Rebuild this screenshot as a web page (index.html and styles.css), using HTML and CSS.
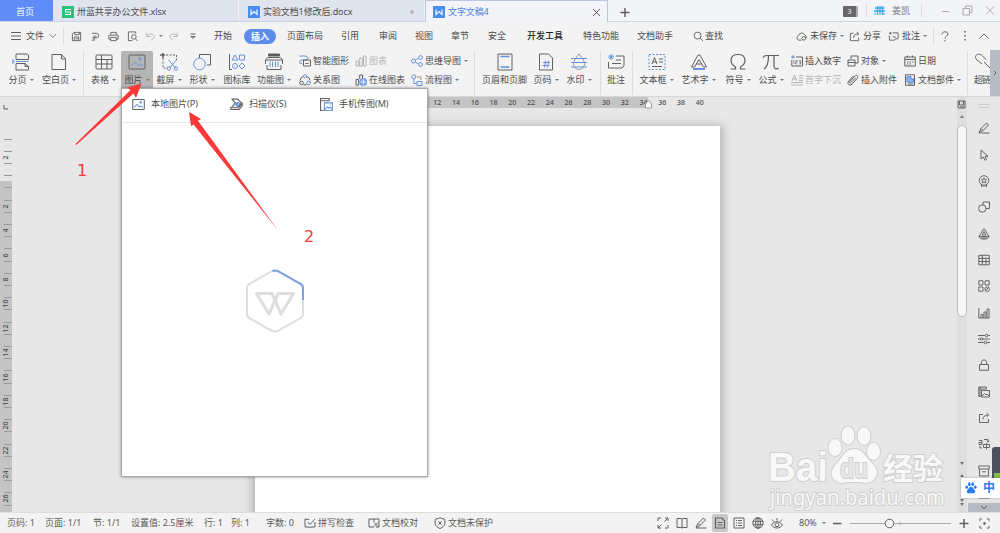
FILE: index.html
```html
<!DOCTYPE html>
<html lang="zh-CN">
<head>
    <meta charset="utf-8">
    <meta name="viewport" content="width=device-width, initial-scale=1.0">
    <title>文字文稿4</title>
    <link rel="stylesheet" href="styles.css">
</head>
<body>
    <!-- 图标 -->
    <svg class="defs">
        <symbol id="i-save" viewBox="0 0 12 12"><path d="M3 1.5h7.5v9h-9V3zM4 1.5V4h5V1.5M3.5 10.5V6.500h5v4M5 8.500h3"/></symbol>
        <symbol id="i-out" viewBox="0 0 12 12"><path d="M2 2.500h5a2.300 2.300 0 0 1 0 5H2.500M7 5.500H4.500V10M2 10h3"/></symbol>
        <symbol id="i-print" viewBox="0 0 12 12"><path d="M3 4V1.500h6V4M3 9H1V4.500h10V9H9M3 7h6v3.500H3z"/></symbol>
        <symbol id="i-preview" viewBox="0 0 12 12"><path d="M9.500 3V1h-8v9.500H6"/><circle cx="7.500" cy="6.500" r="2.500"/><path d="M9.300 8.500l2.200 2.500"/></symbol>
        <symbol id="i-undo" viewBox="0 0 12 12"><path d="M2 2v4h4M2 5.500C4 2.500 10 2.500 10 6c0 2-1.500 3-3.500 4"/></symbol>
        <symbol id="i-redo" viewBox="0 0 12 12"><path d="M10 2v4H6M10 5.500C8 2.500 2 2.500 2 6c0 2 1.500 3 3.500 4"/></symbol>
        <symbol id="i-search" viewBox="0 0 12 12"><circle cx="5" cy="5" r="3.800"/><path d="M7.800 7.800L11 11"/></symbol>
        <symbol id="i-cloud" viewBox="0 0 12 12"><path d="M6 10H3a2.500 2.500 0 0 1-.3-4.800A3.500 3.500 0 0 1 9.300 4.200 2.800 2.800 0 0 1 11 8"/><circle cx="8.500" cy="8" r="2"/></symbol>
        <symbol id="i-share" viewBox="0 0 12 12"><path d="M5 2.500H1.500v8h9V7M5 7.500c0-3 2-4.500 5.500-4.500M8.500 1l2.200 2-2.200 2"/></symbol>
        <symbol id="i-cmt" viewBox="0 0 12 12"><path d="M5 2h6v6.500H8l-1 1.500H1.500V5M1 2.500h3M2.500 1v3M5 6.500h3.500"/></symbol>
        <symbol id="i-pic" viewBox="0 0 18 18"><rect x="1" y="2" width="16" height="14" rx="1"/><g class="b"><path d="M3 13l4-4 3.500 3.500L12.500 11l2.500 2"/><circle cx="12" cy="6" r="1.200"/></g></symbol>
        <symbol id="i-page" viewBox="0 0 18 18"><path d="M2 1.500h9.500L15.500 6v10.500H2zM11.500 1.500V6h4"/></symbol>
        <symbol id="i-break" viewBox="0 0 18 18"><path d="M4 1v5.500h12.500V2L15 1H4M4 17v-6.500h9l3.500 3V17H4M13 10.500v3h3.500"/><path class="b" d="M4 8.500h12.500M.8 6.500L2.500 8.500.8 10.500z"/></symbol>
        <symbol id="i-table" viewBox="0 0 18 18"><rect x="1" y="2" width="16" height="14" rx="1"/><path d="M1 6.500h16M1 11h16M6.500 2v14M12 6.500V16"/></symbol>
        <symbol id="i-cut" viewBox="0 0 18 18"><path stroke-dasharray="2 1.500" d="M6 2h10.500v5M3 5v10h5"/><path stroke-width="1.500" d="M0 2h5M3 0v5"/><g class="b"><path d="M8.500 7l7 8M16.500 7l-7 8"/><circle cx="8.800" cy="15.500" r="1.700"/><circle cx="16" cy="15.500" r="1.700"/></g></symbol>
        <symbol id="i-shape" viewBox="0 0 18 18"><path d="M6.500 5V1.500h11V12H14"/><circle class="b" cx="6.500" cy="11" r="5.800"/></symbol>
        <symbol id="i-lib" viewBox="0 0 18 18"><path d="M1.500 1v15.500H4"/><g class="b"><path d="M4 7l3-5 3 5zM11.500 2h5v5h-5z"/><circle cx="7" cy="13" r="2.500"/><path d="M14 10l3 3-3 3-3-3z"/></g></symbol>
        <symbol id="i-func" viewBox="0 0 18 18"><path class="k" d="M3.500 1h11v2h-11z"/><path d="M.5 7l2-2.500h13l2 2.500H.5V11M17.500 7v4M2 12v4.500h14V12"/><path class="b" d="M5 8.500V14M7.500 8.500V14M10.500 8.500V14M13 8.500V14"/></symbol>
        <symbol id="i-smart" viewBox="0 0 12 12"><path class="b" d="M.5 1H7l2.500 2L7 5H2L.5 7 1 8.500h2"/><path d="M4.500 5h7v6h-7zM6.500 8.500h3"/></symbol>
        <symbol id="i-rel" viewBox="0 0 12 12"><path d="M4 2.500a4.700 4.700 0 0 0-3 4M8 2.500a4.700 4.700 0 0 1 3 4M4.500 10.800h3"/><circle cx="2.500" cy="9" r="1.800"/><circle class="b" cx="9.500" cy="9" r="1.800"/><circle class="b" cx="6" cy="2.300" r="1.600"/></symbol>
        <symbol id="i-chart" viewBox="0 0 12 12"><path d="M1 11V6h2.700v5zM4.700 11V3h2.700v8zM8.500 11V1H11v10z"/></symbol>
        <symbol id="i-ochart" viewBox="0 0 12 12"><path d="M1 11V5.500h2.700V11zM4.700 5V1H7.500v4"/><circle class="bf" cx="8.300" cy="8" r="3.500"/><path stroke="#fff" stroke-width=".6" d="M5 8h6.500M8.300 5v6.500"/></symbol>
        <symbol id="i-mind" viewBox="0 0 12 12"><g class="b"><circle cx="2.500" cy="6" r="2"/><circle cx="9.500" cy="2.500" r="1.900"/><circle cx="9.500" cy="9.500" r="1.900"/><path d="M4.300 5l3.300-2M4.300 7l3.300 2"/></g></symbol>
        <symbol id="i-flow" viewBox="0 0 12 12"><g class="b"><circle cx="2.800" cy="2.800" r="2"/><path d="M2.800 5v4.500H6M6 7.500h5v4H6z"/></g><path stroke-dasharray="1.500 1" d="M6 3h4v3"/></symbol>
        <symbol id="i-hf" viewBox="0 0 18 18"><path d="M2 1h14v16H2z"/><path class="b" d="M4.500 3.500h9M4.500 14h9" stroke-width="1.600"/></symbol>
        <symbol id="i-num" viewBox="0 0 18 18"><path d="M2.500 1h9L15.500 5v12h-13z"/><path class="b" d="M6 9.500h7M5.500 12.500h7M8.500 7.500l-1 7M11.500 7.500l-1 7"/></symbol>
        <symbol id="i-water" viewBox="0 0 18 18"><path class="g" d="M9 .8C7 4 3.500 7 3.500 11a5.500 5.500 0 0 0 11 0C14.500 7 11 4 9 .8z"/><path class="b" d="M1 5.500h16M1 9.500h16M1 14h16"/></symbol>
        <symbol id="i-note" viewBox="0 0 18 18"><path d="M9 3h8v10l-2 2H1.500V9M5 10.500h9M9 7h5"/><path class="b" d="M4 1v6M1 4h6M2 2l4 4M6 2L2 6"/></symbol>
        <symbol id="i-tbox" viewBox="0 0 18 18"><rect class="b" x="1" y="1.500" width="16" height="15" stroke-dasharray="2 1.500"/><path d="M4 11l2.500-6.500L9 11M5 9h3M11 6h4M11 9h4M4 13.500h10"/></symbol>
        <symbol id="i-art" viewBox="0 0 18 18"><path d="M1.500 14L8 2h2l6.500 12h-3L9 6.500 4.500 14zM6.500 11h5"/><path class="b" d="M3 16h12" stroke-width="2"/></symbol>
        <symbol id="i-omega" viewBox="0 0 18 18"><path stroke-width="1.200" d="M1.500 16h5v-2C0 10.500.5 1.500 9 1.500s9 9 2.500 12.500v2h5"/></symbol>
        <symbol id="i-pi" viewBox="0 0 18 18"><path stroke-width="1.200" d="M1 4.500C2 2.500 3 2.500 5 2.500h12M6.500 2.500c0 6-.5 11-4.500 13.500M12 2.500V13c0 3.500 3 3.500 4.500 2"/></symbol>
        <symbol id="i-insnum" viewBox="0 0 12 12"><path d="M5 2h6.500v9H.8V5"/><path class="b" d="M0 2h4M2 0v4"/><path stroke-width=".7" d="M3 5v4M4.700 5.500h1.500v1.500H4.700v2h1.500M8 5.500h1.700V9H8M8 7.200h1.700"/></symbol>
        <symbol id="i-drop" viewBox="0 0 12 12"><path d="M1 7l2.500-6L6 7M2 5h3M8 1.500h4M8 4h4M8 6.500h4M0 8.500h12M0 11h12"/></symbol>
        <symbol id="i-obj" viewBox="0 0 12 12"><path d="M4 4V1h7v7H8M1 5h7v6H1zM1 7.500h7"/></symbol>
        <symbol id="i-clip" viewBox="0 0 12 12"><path d="M8.500 4L4 8.500c-1 1-2 0-1.200-1L8 2c1.500-1.500 3.800.5 2.300 2.300L5 10c-2.500 2.500-5.500-.5-3.300-3L6.500 2"/></symbol>
        <symbol id="i-date" viewBox="0 0 12 12"><path d="M.8 2h10.500v9H.8zM.8 4.500h10.500M3.500.5v2M8.500.5v2M3 7h1.500M5.500 7H7M8 7h1.500M3 9h1.500M5.500 9H7"/></symbol>
        <symbol id="i-part" viewBox="0 0 12 12"><path d="M1.500.8h9v10.500h-9zM4 10h5"/><path class="bf" d="M3 2.500h4v2.300h2.500v3.500H3z"/></symbol>
        <symbol id="i-link" viewBox="0 0 18 18"><path d="M8 11L3 7C-1 3 4-1 8 2.500l4 4M10 9l4 4 3 3"/></symbol>
        <symbol id="i-scan" viewBox="0 0 12 12"><path d="M1.500 1H7l3.500 3.500L8 8M1.500 1L5 4.500 2 8"/><path class="bf" stroke="none" d="M5 6l2-2 2 1-1.500 3z"/><path d="M.8 8.500h7.500l3-3.500v2L8.500 10.500H.8z"/></symbol>
        <symbol id="i-phone" viewBox="0 0 12 12"><path d="M3.500 11.500h-3V.5h8V3M.5 2.500h8"/><path class="b" d="M4 4.500h7.500v7H4zM4.500 10.500L7 8l1.500 1.500L9.500 8.500l2 2M9 6.500h1"/></symbol>
        <symbol id="i-w" viewBox="0 0 12 12"><rect width="12" height="12" fill="#4a8df0" stroke="none"/><path stroke="#fff" stroke-width="1.100" d="M3 3.500v5l3-3 3 3v-5"/></symbol>
        <symbol id="i-s" viewBox="0 0 12 12"><rect width="12" height="12" fill="#2bc07e" stroke="none"/><path stroke="#fff" stroke-width="1.100" d="M9 3.500H3.500V6h5v2.500H3"/></symbol>
        <!-- 侧边栏 -->
        <symbol id="s-pen" viewBox="0 0 12 12"><path d="M1 10.500L3 6.500 8.500 1l2 2L5 8.500zM3 6.500l2 2M1 11h10.500"/></symbol>
        <symbol id="s-cur" viewBox="0 0 12 12"><path d="M3 1v9l2.300-2 1.700 3.300 1.500-.8L7 7.300h3z"/></symbol>
        <symbol id="s-badge" viewBox="0 0 12 12"><circle cx="6" cy="5.500" r="4.800"/><path d="M6 2.800l.8 1.700 1.900.2-1.400 1.300.4 1.900L6 7l-1.700.9.4-1.900-1.400-1.300 1.900-.2zM3.500 9.800v1.700l2.500-1 2.500 1V9.800"/></symbol>
        <symbol id="s-shape" viewBox="0 0 12 12"><path d="M5 4V1h6.500v6.500H8"/><circle cx="4.300" cy="7.500" r="3.700"/></symbol>
        <symbol id="s-art" viewBox="0 0 12 12"><path d="M1 8.500L5.500 1h1L11 8.500zM4 7l2-3.500L8 7zM.8 8.500c1 3.500 9.400 3.500 10.400 0M3 10h6"/></symbol>
        <symbol id="s-tab" viewBox="0 0 12 12"><path d="M.8 1.300h10.500v9.500H.8zM.8 4.300h10.500M.8 7.500h10.500M4.300 1.300v9.500M8 4.300v6.500"/></symbol>
        <symbol id="s-grid" viewBox="0 0 12 12"><path d="M.8.8H5V5H.8zM7 .8h4.200V5H7zM.8 7H5v4.200H.8z"/><circle cx="9.200" cy="9.200" r="2.300"/><path d="M7.500 10.500l3-3"/></symbol>
        <symbol id="s-chart" viewBox="0 0 12 12"><path d="M.8 1v10h10.500M3 11V7.500h2V11M6 11V5h2v6M9 11V2h2v9"/></symbol>
        <symbol id="s-set" viewBox="0 0 12 12"><path d="M0 2.500h7M10 2.500h2M0 6h2M5 6h7M0 9.500h6M9 9.500h3"/><circle cx="8.500" cy="2.500" r="1.300"/><circle cx="3.500" cy="6" r="1.300"/><circle cx="7.500" cy="9.500" r="1.300"/></symbol>
        <symbol id="s-lock" viewBox="0 0 12 12"><path d="M1.500 5.500h9v5.700h-9zM3.300 5.500V3.300c0-3.200 5.400-3.200 5.400 0v2.200"/></symbol>
        <symbol id="s-pics" viewBox="0 0 12 12"><path d="M2.500 10.500H.8V1h7.500v2M.8 3H8M3.500 4.500h8v6.500h-8zM4 10l2.500-2.500L8 9l1-1 2 2M2 .8v9.500"/></symbol>
        <symbol id="s-tr" viewBox="0 0 12 12"><path d="M1 2.500h3v4H1V4.500h3M6 1.500h4V4M8.700 2.800L10 4.200l1.300-1.400M5.500 6.500h6v3h-6zM8.500 5v6.500M2 8v2h2"/></symbol>
        <symbol id="s-box" viewBox="0 0 12 12"><path d="M.8 1h10.500v3H.8zM1.500 4v7h9V4M4 6.800h4"/></symbol>
        <symbol id="s-wave" viewBox="0 0 12 12"><path d="M.8 1v10h10.500V1M1 9l2.500-2L6 9l2.500-2L11 9"/></symbol>
        <!-- 状态栏 -->
        <symbol id="t-spell" viewBox="0 0 12 12"><path d="M5 2.500L1 2v8h4l1 .5 1-.5h4V5M4 5l2 2.500L11 2"/></symbol>
        <symbol id="t-proof" viewBox="0 0 12 12"><path d="M6 10H1V2h10v8H8M6 2v3M6 5.500l4 4M10 5.500l-4 4"/></symbol>
        <symbol id="t-shield" viewBox="0 0 12 12"><path d="M6 .8l4.800 1.700v4C10.800 9 8 10.800 6 11.500 4 10.800 1.200 9 1.200 6.500v-4zM4.300 4.300l3.400 3.400M7.700 4.300L4.300 7.700"/></symbol>
        <symbol id="t-full" viewBox="0 0 12 12"><path d="M1 4V1h3M8 1h3v3M11 8v3H8M4 11H1V8M11 1L7.500 4.500M1 11l3.500-3.500"/></symbol>
        <symbol id="t-read" viewBox="0 0 12 12"><path d="M1 1.500h4l1 .8 1-.8h4v9H7l-1 .5-1-.5H1zM6 2.300V11"/></symbol>
        <symbol id="t-doc" viewBox="0 0 12 12"><path d="M1.500 1h6.500L10.500 4v7h-9zM3.500 5.500h5M3.500 8h5" stroke-width="1.200"/></symbol>
        <symbol id="t-list" viewBox="0 0 12 12"><path d="M1 1h10v10H1zM3 3.500h1M5 3.500h4M3 6h1M5 6h4M3 8.500h1M5 8.500h4"/></symbol>
        <symbol id="t-web" viewBox="0 0 12 12"><circle cx="6" cy="6" r="5.200"/><ellipse cx="6" cy="6" rx="2.400" ry="5.200"/><path d="M1 4.300h10M1 7.700h10M6 1v10"/></symbol>
        <symbol id="t-eye" viewBox="0 0 12 12"><path d="M.5 8C3 3.500 9 3.500 11.500 8 9 12 3 12 .5 8zM6 3.500V1M2.500 4.500L1 2.500M9.500 4.500L11 2.500"/><circle cx="6" cy="7.800" r="1.900"/></symbol>
        <symbol id="t-fit" viewBox="0 0 12 12"><path d="M1 3.500V1h2.500M8.500 1H11v2.500M11 8.500V11H8.500M3.500 11H1V8.500"/><circle class="k" cx="6" cy="6" r="1"/></symbol>
        <symbol id="i-paw" viewBox="0 0 14 14"><g fill="#2b7cf5" stroke="none"><ellipse cx="2" cy="6" rx="1.600" ry="2"/><ellipse cx="5" cy="2.500" rx="1.600" ry="2.200"/><ellipse cx="9" cy="2.500" rx="1.600" ry="2.200"/><ellipse cx="12" cy="6" rx="1.600" ry="2"/><path d="M7 5.500c2 0 2.500 2 4 3.500 2 2 .5 4.500-2 4H5c-2.500.5-4-2-2-4C4.500 7.500 5 5.500 7 5.500z"/></g></symbol>
    </svg>

    <div id="wrap">
        <!-- 标签栏 -->
        <div class="tabs">
            <div class="home">首页</div>
            <div class="tab"><svg class="s12"><use href="#i-s"/></svg><span>卅蓝共享办公文件.xlsx</span></div>
            <div class="tab"><svg class="s12"><use href="#i-w"/></svg><span>实验文档1修改后.docx</span><i class="dot"></i></div>
            <div class="tab active"><svg class="s12"><use href="#i-w"/></svg><span>文字文稿4</span><svg class="close"><path d="M1 1l7 7M8 1L1 8"/></svg></div>
            <svg class="plus"><path d="M5 1v9M.5 5.500h9"/></svg>
            <div class="count">3</div>
            <i class="vline"></i>
            <svg class="avatar"><path d="M3.500 0v9M6 0v9M8.500 0v9M1 2h9.500M0 5h11M1 7v1.500M10 7v1.500"/></svg>
            <span class="user">姜凯</span>
            <i class="vline"></i>
            <svg class="winbtns"><path d="M1 6.500h7M24.500 3V1h6.500v6.500h-2M22 3.500h6.500V10H22zM45 1.500l8 8M53 1.500l-8 8"/></svg>
        </div>

        <!-- 菜单栏 -->
        <div class="menu">
            <svg class="s10"><path d="M0 1.500h10M0 5h10M0 8.500h10"/></svg>
            <span>文件</span>
            <svg class="chev"><path d="M.5 1l3.200 3.500L7 1"/></svg>
            <i class="vline"></i>
            <svg class="s12"><use href="#i-save"/></svg>
            <svg class="s12"><use href="#i-out"/></svg>
            <svg class="s12"><use href="#i-print"/></svg>
            <svg class="s12"><use href="#i-preview"/></svg>
            <svg class="s12 off"><use href="#i-undo"/></svg>
            <i class="caret off"></i>
            <svg class="s12 off"><use href="#i-redo"/></svg>
            <svg class="more"><path d="M.5 1h5M1 3.500h4L3 5.500z"/></svg>
            <span>开始</span>
            <span class="current">插入</span>
            <span>页面布局</span>
            <span>引用</span>
            <span>审阅</span>
            <span>视图</span>
            <span>章节</span>
            <span>安全</span>
            <span class="dark">开发工具</span>
            <span>特色功能</span>
            <span>文档助手</span>
            <svg class="s12"><use href="#i-search"/></svg>
            <span>查找</span>
            <svg class="s12"><use href="#i-cloud"/></svg>
            <span>未保存<i class="caret"></i></span>
            <svg class="s12"><use href="#i-share"/></svg>
            <span>分享</span>
            <svg class="s12"><use href="#i-cmt"/></svg>
            <span>批注<i class="caret"></i></span>
            <i class="vline"></i>
            <svg class="help"><path d="M1 3.500C1 0 7 0 7 3c0 2-3 2.500-3 4.500M4 9v1.500"/></svg>
            <svg class="dots"><path d="M1 0v1.500M1 4v1.500M1 8v1.500"/></svg>
            <svg class="s10"><path d="M.5 7.500L5 3l4.500 4.500"/></svg>
        </div>

        <!-- 功能区 -->
        <div class="ribbon">
            <div class="tool"><svg><use href="#i-break"/></svg><span>分页<i class="caret"></i></span></div>
            <div class="tool"><svg><use href="#i-page"/></svg><span>空白页<i class="caret"></i></span></div>
            <i class="vline"></i>
            <div class="tool"><svg><use href="#i-table"/></svg><span>表格<i class="caret"></i></span></div>
            <div class="tool on"><svg><use href="#i-pic"/></svg><span>图片<i class="caret"></i></span></div>
            <div class="tool"><svg><use href="#i-cut"/></svg><span>截屏<i class="caret"></i></span></div>
            <div class="tool"><svg><use href="#i-shape"/></svg><span>形状<i class="caret"></i></span></div>
            <div class="tool"><svg><use href="#i-lib"/></svg><span>图标库</span></div>
            <div class="tool"><svg><use href="#i-func"/></svg><span>功能图<i class="caret"></i></span></div>
            <div class="pair first">
                <div><svg class="s12"><use href="#i-smart"/></svg><span>智能图形</span></div>
                <div><svg class="s12"><use href="#i-rel"/></svg><span>关系图</span></div>
            </div>
            <div class="pair">
                <div class="off"><svg class="s12"><use href="#i-chart"/></svg><span>图表</span></div>
                <div><svg class="s12"><use href="#i-ochart"/></svg><span>在线图表</span></div>
            </div>
            <div class="pair">
                <div><svg class="s12"><use href="#i-mind"/></svg><span>思维导图<i class="caret"></i></span></div>
                <div><svg class="s12"><use href="#i-flow"/></svg><span>流程图<i class="caret"></i></span></div>
            </div>
            <i class="vline"></i>
            <div class="tool"><svg><use href="#i-hf"/></svg><span>页眉和页脚</span></div>
            <div class="tool"><svg><use href="#i-num"/></svg><span>页码<i class="caret"></i></span></div>
            <div class="tool"><svg><use href="#i-water"/></svg><span>水印<i class="caret"></i></span></div>
            <i class="vline"></i>
            <div class="tool"><svg><use href="#i-note"/></svg><span>批注</span></div>
            <i class="vline"></i>
            <div class="tool"><svg><use href="#i-tbox"/></svg><span>文本框<i class="caret"></i></span></div>
            <div class="tool"><svg><use href="#i-art"/></svg><span>艺术字<i class="caret"></i></span></div>
            <div class="tool"><svg><use href="#i-omega"/></svg><span>符号<i class="caret"></i></span></div>
            <div class="tool"><svg><use href="#i-pi"/></svg><span>公式<i class="caret"></i></span></div>
            <div class="pair first">
                <div><svg class="s12"><use href="#i-insnum"/></svg><span>插入数字</span></div>
                <div class="off"><svg class="s12"><use href="#i-drop"/></svg><span>首字下沉</span></div>
            </div>
            <div class="pair">
                <div><svg class="s12"><use href="#i-obj"/></svg><span>对象<i class="caret"></i></span></div>
                <div><svg class="s12"><use href="#i-clip"/></svg><span>插入附件</span></div>
            </div>
            <div class="pair">
                <div><svg class="s12"><use href="#i-date"/></svg><span>日期</span></div>
                <div><svg class="s12"><use href="#i-part"/></svg><span>文档部件<i class="caret"></i></span></div>
            </div>
            <i class="vline"></i>
            <div class="tool cut"><svg><use href="#i-link"/></svg><span>超链</span></div>
            <div class="next"><svg><path d="M1 1l2 2-2 2"/></svg></div>
        </div>

        <!-- 编辑区 -->
        <div class="work">
            <div class="vruler">
                <svg class="corner"><path d="M1 0v4h4"/></svg>
                <div class="nums"><b></b><b>2</b><b></b><b>2</b><b>4</b><b>6</b><b>8</b><b>10</b><b>12</b><b>14</b><b>16</b><b>18</b><b>20</b><b>22</b><b>24</b><b>26</b></div>
            </div>
            <div class="canvas">
                <div class="hruler"><b>12</b><b>14</b><b>16</b><b>18</b><b>20</b><b>22</b><b>24</b><b>26</b><b>28</b><b>30</b><b>32</b><b>34</b><b>36</b><b>38</b><b>40</b></div>
                <svg class="indent"><path d="M3.500 .5L6.500 4v4h-6V4z"/></svg>
                <div class="paper"></div>
            </div>
            <div class="vscroll">
                <svg class="s10"><path d="M1 1h7v7H1zM2.500 1v4h4V1M3 7h4"/></svg>
                <i class="up"></i>
                <div class="thumb"></div>
                <i class="down"></i>
                <i class="up"></i>
                <i class="down"></i>
                <i class="down"></i>
            </div>
            <div class="side">
                <i class="grip"></i>
                <svg class="s12"><use href="#s-pen"/></svg>
                <svg class="s12"><use href="#s-cur"/></svg>
                <svg class="s12"><use href="#s-badge"/></svg>
                <svg class="s12"><use href="#s-shape"/></svg>
                <svg class="s12"><use href="#s-art"/></svg>
                <svg class="s12"><use href="#s-tab"/></svg>
                <svg class="s12"><use href="#s-grid"/></svg>
                <svg class="s12"><use href="#s-chart"/></svg>
                <svg class="s12"><use href="#s-set"/></svg>
                <svg class="s12"><use href="#s-lock"/></svg>
                <svg class="s12"><use href="#s-pics"/></svg>
                <svg class="s12"><use href="#i-share"/></svg>
                <svg class="s12"><use href="#s-tr"/></svg>
                <svg class="s12"><use href="#s-box"/></svg>
                <svg class="s12"><use href="#s-wave"/></svg>
                <div class="fold"><svg><path d="M1 1l3 2.500L7 1"/></svg></div>
            </div>
        </div>

        <!-- 状态栏 -->
        <div class="status">
            <span>页码: 1</span>
            <span>页面: 1/1</span>
            <span>节: 1/1</span>
            <span>设置值: 2.5厘米</span>
            <span>行: 1</span>
            <span>列: 1</span>
            <span>字数: 0</span>
            <span><svg class="s12"><use href="#t-spell"/></svg>拼写检查</span>
            <span><svg class="s12"><use href="#t-proof"/></svg>文档校对</span>
            <span><svg class="s12"><use href="#t-shield"/></svg>文档未保护</span>
            <div class="views">
                <svg class="s12"><use href="#t-full"/></svg>
                <svg class="s12"><use href="#t-read"/></svg>
                <svg class="s12"><use href="#s-pen"/></svg>
                <div class="sel"><svg class="s12"><use href="#t-doc"/></svg></div>
                <svg class="s12"><use href="#t-list"/></svg>
                <svg class="s12"><use href="#t-web"/></svg>
                <svg class="s12"><use href="#t-eye"/></svg>
            </div>
            <span>80%<i class="caret"></i></span>
            <svg class="zoombar"><path class="thick" d="M0 6.500h8.500M126.500 6.500h9M131 2v9"/><path d="M17 6.500h35M61 6.500h57M67 4.500v4" class="thin"/><circle cx="56.500" cy="6.500" r="4.300"/></svg>
            <svg class="s12"><use href="#t-fit"/></svg>
        </div>

        <!-- 图片下拉面板 -->
        <div class="popup">
            <div class="pop-head">
                <svg><use href="#i-pic"/></svg><span>本地图片(P)</span>
                <svg><use href="#i-scan"/></svg><span>扫描仪(S)</span>
                <svg><use href="#i-phone"/></svg><span>手机传图(M)</span>
            </div>
            <svg class="loading" viewBox="0 0 60 66">
                <path d="M27 3.200L5 15.500Q2 17 2 20v26Q2 49 5 50.500l22 12.300q3 1.500 6 0L55 50.500Q58 49 58 46V20Q58 17 55 15.500L33 3.200q-3-1.500-6 0z"/>
                <path class="arc" d="M27.500 3q2.500-1.300 5.500.2L55 15.500Q58 17 58 20v12"/>
                <path class="mark" d="M11.500 25.500H27L36 46 48.500 25.500H33L24 46z"/>
            </svg>
        </div>

        <!-- 标注 -->
        <svg class="arrows">
            <path d="M75.500 144L130.500 90 127 87.500 141.500 83.500 136 98 133.500 93.500 76.200 145zM189 112l12 7-3 1.800L278.200 230.500 193.500 124.500 191 126z"/>
            <text x="77" y="176">1</text>
            <text x="304" y="242">2</text>
        </svg>

        <!-- 水印 -->
        <svg class="logo">
            <g class="brand">
                <text x="1" y="56" class="latin" textLength="60" lengthAdjust="spacingAndGlyphs">Bai</text>
                <ellipse cx="68" cy="22.500" rx="6.500" ry="8.500"/>
                <ellipse cx="81" cy="10.500" rx="6.500" ry="9"/>
                <ellipse cx="97" cy="11" rx="6.500" ry="9"/>
                <ellipse cx="106.500" cy="26.500" rx="6.500" ry="8.500"/>
                <path d="M87 24c9 0 11 7 17 13 6 6 8 11 4 16-4 6-10 5-15 4H81c-5 1-11 2-15-4-3-5-1-10 5-16 5-6 8-13 16-13z"/>
                <text x="73" y="53" class="du" textLength="28" lengthAdjust="spacingAndGlyphs">du</text>
                <text x="116" y="54" class="cn">经验</text>
            </g>
            <text x="3" y="80" class="url" textLength="175" lengthAdjust="spacingAndGlyphs">jingyan.baidu.com</text>
        </svg>
        <div class="gadget"></div>
        <div class="ime"><svg><use href="#i-paw"/></svg><span>中</span></div>
    </div>
</body>
</html>
```

FILE: styles.css
```css
* {
    margin: 0;
    padding: 0;
    box-sizing: border-box;
}
body {
    overflow: hidden;
    font-family: "Noto Sans", "Noto Sans CJK SC", sans-serif;
    font-size: 9px;
    line-height: 12px;
    color: #4c4c4c;
}
svg {
    display: block;
    flex: none;
    fill: none;
    stroke: #606060;
    stroke-width: 1;
    overflow: visible;
}
span {
    white-space: nowrap;
}
.defs {
    position: absolute;
    width: 0;
    height: 0;
}
.b {
    stroke: #6892dc;
}
.bf {
    stroke: #5b8de6;
    fill: #8fb2f2;
}
.k {
    fill: #555;
}
.g {
    stroke: #999;
}
.s12 {
    width: 12px;
    height: 12px;
}
.s10 {
    width: 10px;
    height: 10px;
}
.caret {
    display: inline-block;
    border: 2px solid transparent;
    border-top: 2.5px solid #777;
    border-bottom: 0;
    margin-left: 3px;
    vertical-align: 2px;
}
.off {
    color: #b5b5b5;
}
.off svg, svg.off {
    stroke: #b5b5b5;
}
.vline {
    width: 1px;
    background-color: #dcdcdc;
}
#wrap {
    position: relative;
    display: flex;
    flex-direction: column;
    width: 1000px;
    height: 533px;
    background-color: #f3f3f3;
    overflow: hidden;
}

/* 标签栏 */
.tabs {
    display: flex;
    align-items: center;
    height: 22px;
    background-color: #f3f4f8;
    border-bottom: 1px solid #ccd4e6;
}
.home {
    width: 53px;
    height: 21px;
    padding-right: 3px;
    line-height: 24px;
    text-align: center;
    color: #fff;
    background-color: #5f8cf8;
}
.tab {
    display: flex;
    align-items: center;
    width: 186px;
    height: 22px;
    padding: 3px 10px 0 9px;
    gap: 3px;
    letter-spacing: -.1px;
    background-color: #e0e4ee;
    border-bottom: 1px solid #ccd4e6;
    border-right: 1px solid #f0f2f7;
}
.tab span {
    flex: 1;
}
.tab.active {
    width: 183px;
    padding: 2px 6px 0 7px;
    color: #4b83e6;
    background-color: #f3f4f8;
    border: 1px solid #b9c6e6;
    border-bottom: 0;
}
.dot {
    width: 4px;
    height: 4px;
    border-radius: 50%;
    background-color: #b5b8c0;
}
.close {
    width: 9px;
    height: 9px;
}
.plus {
    width: 10px;
    height: 11px;
    margin: 3px 213px 0 12px;
    stroke-width: 1.5;
}
.count {
    width: 13px;
    height: 11px;
    margin: 2px 10px 0 0;
    line-height: 11px;
    font-size: 7px;
    text-align: center;
    color: #fff;
    background-color: #666;
    border-radius: 1px;
    box-shadow: 2px 0 #aaa;
}
.tabs .vline {
    height: 13px;
}
.avatar {
    width: 11px;
    height: 9px;
    margin: 0 7px 0 7px;
    stroke: #36a9ea;
    stroke-width: 1.3;
}
.user {
    width: 29px;
    color: #777;
}
.winbtns {
    width: 56px;
    height: 11px;
    margin-left: 19px;
    stroke: #aaa;
}

/* 菜单栏，每列宽度对应一个菜单项 */
.menu {
    display: grid;
    grid-template-columns: 15px 23px 14px 8px 19px 18px 19px 18px 14px 9px 22px 24px 30px 43px 54px 38px 36px 36px 37px 39px 56px 54px 56px 12px 91px 14px 39px 14px 25px 14px 31px 8px 23px 15px 10px;
    align-items: center;
    height: 28px;
    padding-left: 11px;
}
.menu .s12 {
    width: 11px;
    height: 11px;
}
.menu > .caret {
    justify-self: start;
    margin-left: 0;
}
.menu .vline {
    height: 16px;
}
.chev {
    width: 8px;
    height: 6px;
    stroke: #888;
}
.more {
    width: 6px;
    height: 6px;
}
.current {
    justify-self: start;
    width: 32px;
    height: 15px;
    line-height: 15px;
    text-align: center;
    font-weight: bold;
    color: #fff;
    background-color: #5a8ee8;
    border-radius: 8px;
}
.dark {
    color: #222;
    font-weight: 500;
}
.help {
    width: 8px;
    height: 11px;
}
.dots {
    width: 2px;
    height: 10px;
    stroke-width: 1.5;
}

/* 功能区 */
.ribbon {
    display: grid;
    grid-template-columns: 34px 42px 6px 35px 32px 32px 34px 36px 38px 62px 56px 60px 6px 55px 28px 38px 5px 26px 6px 43px 41px 38px 28px 62px 57px 60px 6px 20px 10px;
    height: 47px;
    padding-left: 4px;
    border-bottom: 1px solid #d8d8d8;
}
.ribbon .vline {
    height: 44px;
    margin: 1px auto 0;
}
.tool {
    display: flex;
    flex-direction: column;
    align-items: center;
    padding-top: 3px;
}
.tool svg {
    width: 18px;
    height: 18px;
}
.tool span {
    margin-top: 3px;
}
.tool.on {
    height: 38px;
    margin-top: 1px;
    padding-top: 2px;
    background-color: #b5b5b5;
    border-radius: 2px 2px 0 0;
}
.pair {
    display: grid;
    grid-template-rows: 19px 19px;
    padding-top: 1px;
}
.pair.first {
    padding-left: 6px;
}
.pair div {
    display: flex;
    align-items: center;
    gap: 2px;
}
.tool.cut {
    align-items: flex-start;
    padding-left: 4px;
    overflow: hidden;
}
.tool.cut span {
    letter-spacing: -1px;
}
.next {
    display: flex;
    align-items: center;
    justify-content: center;
    height: 46px;
    background-color: #b8bbc4;
}
.next svg {
    width: 4px;
    height: 6px;
}

/* 编辑区 */
.work {
    display: flex;
    height: 415px;
    background-color: #e7e7e7;
}
.vruler {
    width: 12px;
    overflow: hidden;
    background: linear-gradient(#e7e7e7 84px, #c4c4c4 84px);
}
.corner {
    width: 5px;
    height: 5px;
    margin: 8px 0 0 3px;
}
.nums {
    height: 390px;
    margin-top: 23px;
    background: repeating-linear-gradient(transparent 0 5.6px, #999 5.6px 6.6px, transparent 6.6px 12.2px) 4px 0 / 8px 100% no-repeat;
}
.nums b {
    display: block;
    width: 12px;
    height: 24.4px;
    line-height: 12px;
    font-size: 7px;
    font-weight: 500;
    text-align: center;
    writing-mode: vertical-rl;
    transform: rotate(180deg);
}
.nums b:first-child {
    height: 12px;
}
.canvas {
    position: relative;
    width: 945px;
    overflow: hidden;
}
.hruler {
    display: flex;
    height: 11px;
    padding-left: 416px;
    background: linear-gradient(90deg, #e7e7e7 400px, #c4c4c4 400px 636px, #e7e7e7 636px);
}
.hruler b {
    width: 18.75px;
    line-height: 11px;
    font-size: 7px;
    font-weight: 500;
    text-align: center;
}
.indent {
    position: absolute;
    left: 633px;
    top: 3px;
    width: 7px;
    height: 9px;
    fill: #fff;
    stroke: #999;
}
.paper {
    width: 465px;
    height: 400px;
    margin: 18px 0 0 243px;
    background-color: #fff;
    box-shadow: 0 2px 9px 3px rgba(0, 0, 0, .22);
}
.vscroll {
    display: flex;
    flex-direction: column;
    align-items: center;
    width: 10px;
    overflow: hidden;
    background-color: #dedede;
}
.vscroll > * {
    flex: none;
}
.vscroll .s10 {
    margin: 3px 0 5px;
}
.thumb {
    width: 10px;
    height: 192px;
    margin: 7px 0 145px;
    background-color: #f7f7f7;
    border: 1px solid #bbb;
    border-radius: 5px;
}
.up, .down {
    border: 2px solid transparent;
    border-bottom: 3px solid #777;
    border-top: 0;
}
.down {
    border-top: 3px solid #777;
    border-bottom: 0;
    margin-bottom: 9px;
}
.vscroll .down + .up {
    margin-bottom: 22px;
}
.vscroll .down + .down {
    margin-top: -8px;
}
.side {
    display: grid;
    grid-template-rows: 18px repeat(14, 26.35px) 19px 9px;
    justify-items: center;
    align-items: center;
    width: 33px;
    overflow: hidden;
}
.side .s12 {
    stroke: #666;
}
.grip {
    width: 12px;
    height: 4px;
    border: solid #ccc;
    border-width: 1px 0;
}
.fold {
    display: flex;
    align-items: center;
    justify-content: center;
    width: 32px;
    height: 9px;
    background-color: #b8bbc4;
}
.fold svg {
    width: 8px;
    height: 5px;
}

/* 状态栏 */
.status {
    display: grid;
    grid-template-columns: 38px 48px 38px 73px 27px 35px 38px 64px 66px 222px 143px 34px 146px 12px;
    align-items: center;
    height: 21px;
    padding-left: 7px;
    color: #5a5a5a;
    background-color: #f3f3f3;
    border-top: 1px solid #ddd;
}
.status > span {
    display: flex;
    align-items: center;
    gap: 2px;
}
.status > .s12 {
    width: 11px;
    height: 11px;
}
.views {
    display: grid;
    grid-template-columns: repeat(7, 19px);
    justify-items: center;
    align-items: center;
    margin-left: -3px;
}
.sel {
    padding: 3px 2px;
    background-color: #c8c8c8;
    border-radius: 2px;
}
.zoombar {
    width: 135px;
    height: 13px;
}
.thick {
    stroke-width: 1.5;
}
.thin {
    stroke: #aaa;
}

/* 下拉面板 */
.popup {
    position: absolute;
    left: 121px;
    top: 88px;
    width: 307px;
    height: 389px;
    background-color: #fff;
    border: 1px solid #aaa;
    box-shadow: 0 0 3px rgba(0, 0, 0, .4);
}
.pop-head {
    display: grid;
    grid-template-columns: 19px 79px 19px 71px 19px 60px;
    align-items: center;
    height: 34px;
    padding: 0 0 3px 10px;
    border-bottom: 1px solid #e8e8e8;
}
.pop-head svg {
    width: 13px;
    height: 13px;
}
.pop-head svg:first-child {
    stroke-width: 1.4;
}
.loading {
    width: 60px;
    height: 66px;
    margin: 145px 0 0 122.5px;
    stroke: #dedede;
    stroke-width: 2;
}
.loading .arc {
    stroke: #7da2e3;
}
.loading .mark {
    stroke-width: 3.2;
    stroke-linejoin: round;
}

/* 标注 */
.arrows {
    position: absolute;
    left: 0;
    top: 0;
    width: 430px;
    height: 260px;
    fill: #fa3838;
    stroke: none;
}
.arrows text {
    font-family: "DejaVu Sans", sans-serif;
    font-size: 16px;
}

/* 水印 */
.logo {
    position: absolute;
    left: 767px;
    top: 425px;
    width: 182px;
    height: 90px;
    fill: #f8f8f8;
    stroke: #cfcfcf;
    stroke-width: 2;
    paint-order: stroke;
}
.latin {
    font-family: "Liberation Sans", sans-serif;
    font-size: 41px;
    font-weight: bold;
}
.du {
    font-family: "Liberation Sans", sans-serif;
    font-size: 27px;
    font-weight: bold;
    fill: #e7e7e7;
}
.cn {
    font-family: "Noto Sans CJK SC", sans-serif;
    font-size: 30px;
    font-weight: bold;
}
.url {
    font-size: 21px;
}
.gadget {
    position: absolute;
    left: 992px;
    top: 447px;
    width: 12px;
    height: 34px;
    background: linear-gradient(#4c5160 24px, #7cc04c 24px);
    border: 2px solid #4c5160;
    border-radius: 3px;
}
.ime {
    position: absolute;
    left: 961px;
    top: 478px;
    display: flex;
    align-items: center;
    gap: 6px;
    width: 39px;
    height: 20px;
    padding-left: 4px;
    background-color: #fff;
    box-shadow: 0 0 2px rgba(0, 0, 0, .3);
}
.ime svg {
    width: 12px;
    height: 12px;
}
.ime span {
    font-size: 12px;
    font-weight: bold;
    color: #2b7cf5;
}
```
